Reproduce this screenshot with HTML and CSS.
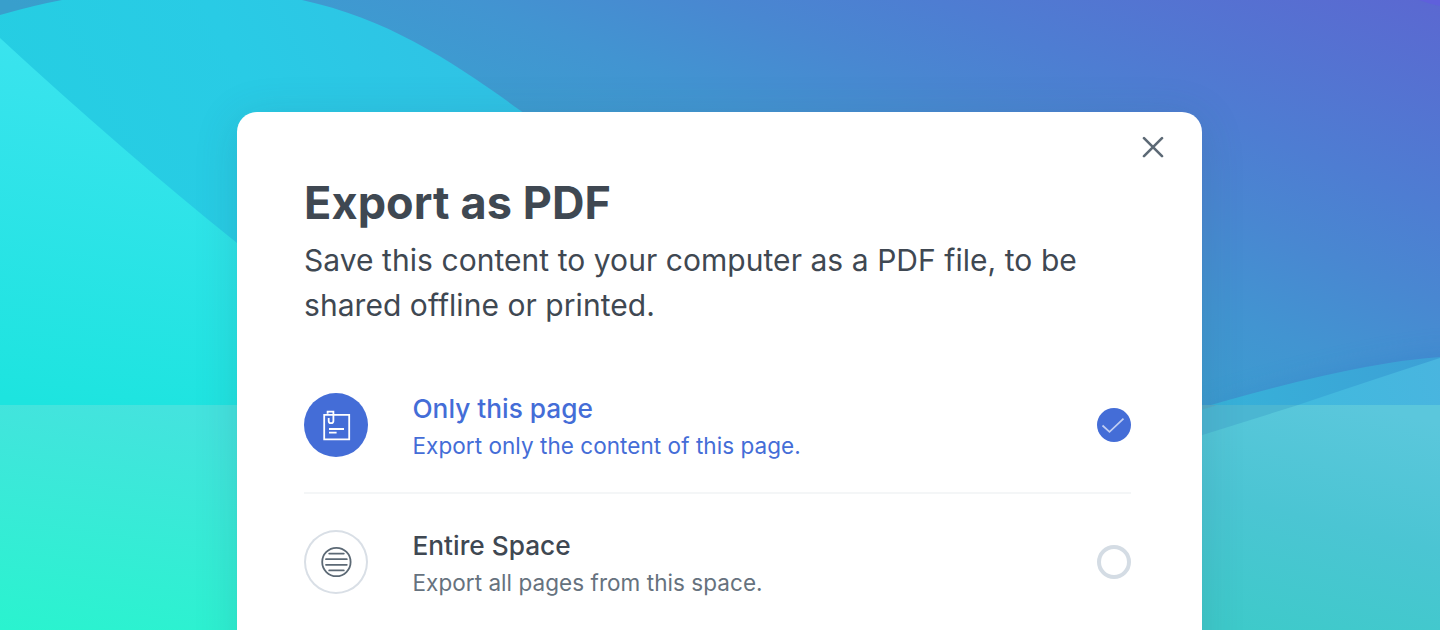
FILE: index.html
```html
<!DOCTYPE html>
<html lang="en">
<head>
<meta charset="utf-8">
<title>Export as PDF</title>
<link rel="stylesheet" href="styles.css">
</head>
<body>
<main class="stage">
  <svg class="backdrop" viewBox="0 0 1440 630" aria-hidden="true">
    <defs>
      <linearGradient id="sky" gradientUnits="userSpaceOnUse" x1="0" y1="0" x2="212" y2="-510">
        <stop offset="0" stop-color="#389fcc"/><stop offset=".16" stop-color="#3c9dd0"/><stop offset=".33" stop-color="#4294d1"/><stop offset=".5" stop-color="#4987d1"/><stop offset=".65" stop-color="#4e7dd2"/><stop offset="1" stop-color="#5b68d1"/>
      </linearGradient>
      <linearGradient id="hill" gradientUnits="userSpaceOnUse" x1="60" y1="230" x2="480" y2="20">
        <stop offset="0" stop-color="#25cee2"/><stop offset=".5" stop-color="#29cbe5"/><stop offset="1" stop-color="#30c2e5"/>
      </linearGradient>
      <linearGradient id="slope" gradientUnits="userSpaceOnUse" x1="110" y1="60" x2="45" y2="405">
        <stop offset="0" stop-color="#3ae3ee"/><stop offset="1" stop-color="#1de4df"/>
      </linearGradient>
      <linearGradient id="shore" gradientUnits="userSpaceOnUse" x1="110" y1="400" x2="75" y2="640">
        <stop offset="0" stop-color="#44e3de"/><stop offset="1" stop-color="#2af3cf"/>
      </linearGradient>
      <linearGradient id="wave" gradientUnits="userSpaceOnUse" x1="1202" y1="420" x2="1440" y2="350">
        <stop offset="0" stop-color="#36b3d9"/><stop offset="1" stop-color="#3da0d6"/>
      </linearGradient>
      <linearGradient id="crest" gradientUnits="userSpaceOnUse" x1="1290" y1="410" x2="1440" y2="360">
        <stop offset="0" stop-color="#40bade"/><stop offset="1" stop-color="#49b5df"/>
      </linearGradient>
      <linearGradient id="sea" gradientUnits="userSpaceOnUse" x1="1345" y1="400" x2="1285" y2="640">
        <stop offset="0" stop-color="#5bc7dc"/><stop offset=".5" stop-color="#4bc5d3"/><stop offset="1" stop-color="#3ecaca"/>
      </linearGradient>
      <filter id="soft" x="-20%" y="-50%" width="140%" height="200%"><feGaussianBlur stdDeviation="14"/></filter>
    </defs>
    <rect width="1440" height="630" fill="url(#sky)"/>
    <path d="M1419 0Q1430 4 1440 6V0Z" fill="#5f60db"/>
    <path d="M0 15Q35 5 62 0H302C390 19 456 64 521 111L700 250V405H0Z" fill="url(#hill)"/>
    <path d="M0 38C80 112 160 181 237 243L360 340V405H0Z" fill="url(#slope)"/>
    <path d="M1180 420Q1370 360 1460 355V410Z" fill="#2c70c5" opacity=".35" filter="url(#soft)"/>
    <path d="M1180 414Q1350 363 1440 357V406H1180Z" fill="url(#wave)"/>
    <path d="M1298 405Q1366 382 1440 358V406Z" fill="url(#crest)"/>
    <path d="M0 405H700V630H0Z" fill="url(#shore)"/>
    <path d="M700 405H1440V630H700Z" fill="url(#sea)"/>
    <path d="M1180 414L1218 405H1298L1180 442Z" fill="#4bb6d2"/>
    <path d="M1180 405H1218L1180 416Z" fill="#54abc6"/>
  </svg>

  <section class="dialog">
    <button class="close" aria-label="Close">
      <svg viewBox="0 0 22 22"><path d="M2 2.2L20 20.2M20 2.2L2 20.2"/></svg>
    </button>
    <h1 class="title">Export as PDF</h1>
    <p class="lead">Save this content to your computer as a PDF file, to be<br>shared offline or printed.</p>

    <div class="option selected">
      <span class="badge">
        <svg viewBox="0 0 64 64"><path d="M23.6 21.9H45.2V46.4H20.2V21.9H23.6M23.6 20.8V18.6H29.4V28Q29.4 30.2 27.1 30.2H26.8Q24.7 30.2 24.7 28V25"/><path d="M25 36H40M25 39.7H32.6"/></svg>
      </span>
      <span class="copy"><span class="name">Only this page</span><span class="detail">Export only the content of this page.</span></span>
      <span class="radio"><svg viewBox="0 0 34 34"><path d="M5.5 17.5L12.5 23.8L26.5 10.7"/></svg></span>
    </div>

    <div class="option">
      <span class="badge">
        <svg viewBox="0 0 64 64"><circle cx="32.4" cy="32" r="14.2"/><path d="M25.2 23.6H39.8M22 29.2H42.8M22 34.8H42.8M25.2 40.4H39.8"/></svg>
      </span>
      <span class="copy"><span class="name">Entire Space</span><span class="detail">Export all pages from this space.</span></span>
      <span class="radio"></span>
    </div>
  </section>
</main>
</body>
</html>
```
FILE: styles.css
```css
* { box-sizing: border-box; }

body {
  margin: 0;
  font-family: Inter, "Liberation Sans", sans-serif;
  color: #3f4852;
}

.stage {
  position: relative;
  width: 1440px;
  height: 630px;
  padding: 112px 238px 0 237px;
  overflow: hidden;
}

.backdrop {
  position: absolute;
  inset: 0;
  width: 1440px;
  height: 630px;
}

.dialog {
  position: relative;
  height: 640px;
  padding: 67px 71px 0 67px;
  border-radius: 20px;
  background: #fff;
  box-shadow: 0 6px 44px rgba(45, 75, 100, .16);
}

.close {
  position: absolute;
  top: 24px;
  right: 38px;
  width: 22px;
  height: 22px;
  padding: 0;
  border: 0;
  background: none;
}

.close svg {
  display: block;
  width: 22px;
  height: 22px;
  fill: none;
  stroke: #5c6975;
  stroke-width: 2.6;
  stroke-linecap: round;
}

.title {
  margin: 0;
  font-size: 45px;
  font-weight: 700;
  line-height: 48px;
  letter-spacing: .1px;
}

.lead {
  margin: 11px 0 0;
  font-size: 30px;
  line-height: 45px;
  letter-spacing: .05px;
  white-space: nowrap;
}

.option {
  display: flex;
  align-items: center;
  height: 136px;
}

.lead + .option {
  height: 138px;
  margin-top: 28px;
  padding-top: 1px;
  border-bottom: 2px solid #f4f6f7;
}

.badge {
  flex: none;
  width: 64px;
  height: 64px;
  border-radius: 50%;
  box-shadow: inset 0 0 0 2px #d9dfe6;
}

.badge svg {
  display: block;
  fill: none;
  stroke: #5c6975;
  stroke-width: 1.8;
  stroke-linecap: round;
}

.copy {
  display: flex;
  flex: 1;
  flex-direction: column;
  margin-left: 44.5px;
  padding-top: 4px;
}

.name {
  font-size: 26.25px;
  font-weight: 500;
  line-height: 37px;
}

.detail {
  font-size: 22.5px;
  line-height: 37px;
  letter-spacing: .05px;
  color: #66727e;
}

.radio {
  flex: none;
  width: 34px;
  height: 34px;
  border: 4px solid #d4dce4;
  border-radius: 50%;
}

.selected .badge,
.selected .radio {
  border: 0;
  background: #446dd7;
  box-shadow: none;
}

.selected .badge svg {
  stroke: #fff;
  stroke-linecap: butt;
}

.selected .name,
.selected .detail {
  color: #446dd7;
}

.radio svg {
  display: block;
  fill: none;
  stroke: #c1cef2;
  stroke-width: 1.7;
}
```
